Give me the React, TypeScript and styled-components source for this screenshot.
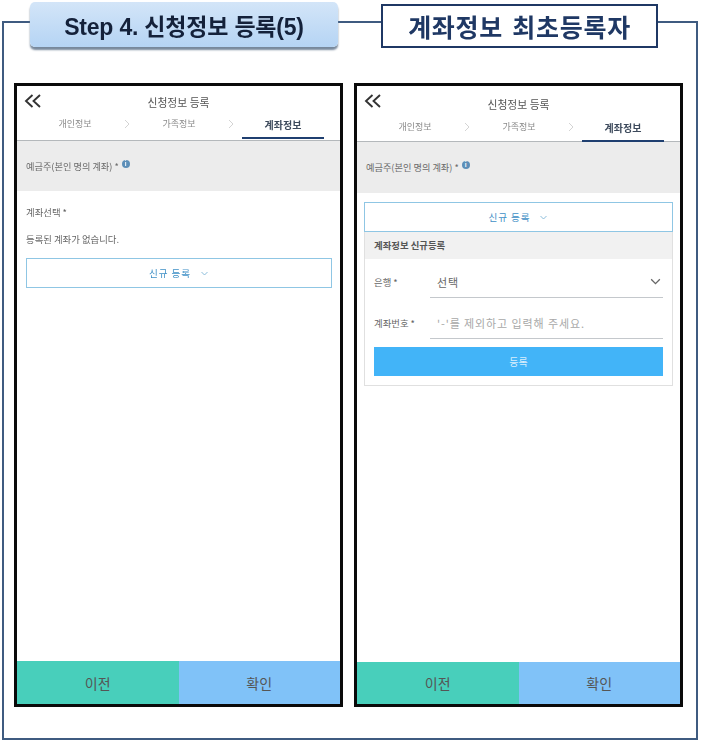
import React from 'react';
import styled, { createGlobalStyle } from 'styled-components';

const GlobalStyle = createGlobalStyle`
    html, body {
        margin: 0;
        padding: 0;
        background: #fff;
    }
    body {
        font-family: "Noto Sans CJK KR", "Noto Sans", sans-serif;
    }
`;

const Page = styled.div`
    width: 703px;
    height: 744px;
    padding: 21px 0 0 2px;
    box-sizing: border-box;
    filter: blur(0.35px);
`;

const Frame = styled.div`
    width: 696px;
    height: 719px;
    box-sizing: border-box;
    border: 2px solid #3f5b80;
`;

const Header = styled.div`
    display: flex;
    align-items: flex-start;
    height: 81px;
    margin-top: -21px;
    padding-left: 26px;
`;

const StepBadge = styled.div`
    width: 308px;
    height: 45px;
    display: flex;
    align-items: center;
    justify-content: center;
    box-sizing: border-box;
    border-radius: 5px;
    background: linear-gradient(#d3e5f8, #b5d4f4);
    box-shadow: 0 3px 2px #77889c;
    color: #14213a;
    font-family: "Liberation Sans", "Noto Sans CJK KR", sans-serif;
    font-size: 23px;
    font-weight: 700;
    letter-spacing: -0.2px;
    white-space: nowrap;
`;

const TitleBox = styled.div`
    width: 277px;
    height: 44px;
    margin: 2px 0 0 43px;
    display: flex;
    align-items: center;
    justify-content: center;
    box-sizing: border-box;
    border: 2px solid #1f3864;
    background: #fff;
    color: #1f3864;
    font-size: 25px;
    font-weight: 700;
    letter-spacing: 0.7px;
    word-spacing: 3px;
    white-space: nowrap;
`;

const Phones = styled.div`
    display: flex;
    gap: 11px;
    padding-left: 10px;
`;

const PhoneShell = styled.div`
    width: 329px;
    height: 624px;
    display: flex;
    flex-direction: column;
    box-sizing: border-box;
    border: 3px solid #0a0a0a;
    background: #fff;
`;

const TopBar = styled.div<{ $tall: boolean }>`
    position: relative;
    height: ${p => (p.$tall ? 56 : 55)}px;
    flex: none;
    box-sizing: border-box;
    border-bottom: 1px solid #b4b8bb;
`;

const BackIcon = styled.svg`
    position: absolute;
    left: 7px;
    top: 8px;
    width: 18px;
    height: 14px;
`;

const ScreenTitle = styled.div<{ $tall: boolean }>`
    padding-top: ${p => (p.$tall ? 11 : 9)}px;
    height: 15px;
    line-height: 15px;
    text-align: center;
    font-size: 10.8px;
    color: #555;
`;

const Tabs = styled.div<{ $tall: boolean }>`
    display: flex;
    align-items: center;
    height: 30px;
    margin-top: ${p => (p.$tall ? 0 : -1)}px;
    padding-left: 17px;
`;

const Tab = styled.div<{ $active?: boolean }>`
    width: 82px;
    height: 30px;
    line-height: ${p => (p.$active ? 31 : 29)}px;
    text-align: center;
    box-sizing: border-box;
    font-size: ${p => (p.$active ? 10 : 9)}px;
    font-weight: ${p => (p.$active ? 700 : 400)};
    color: ${p => (p.$active ? '#3d4a5c' : '#8a8a8a')};
    border-bottom: ${p => (p.$active ? '2px solid #1f3f70' : 'none')};
`;

const TabArrow = styled.svg`
    width: 22px;
    height: 10px;
    flex: none;
`;

const OwnerBand = styled.div<{ $tall: boolean }>`
    height: ${p => (p.$tall ? 51 : 50)}px;
    flex: none;
    display: flex;
    align-items: flex-start;
    gap: 3px;
    padding: 17px 0 0 9px;
    box-sizing: border-box;
    background: #ececec;
    font-size: 9.2px;
    line-height: 16px;
    color: #6a6a6a;
`;

const InfoDot = styled.span`
    width: 8px;
    height: 8px;
    margin-top: 2px;
    border-radius: 50%;
    background: #5d8fb8;
    color: #fff;
    font-size: 6px;
    font-weight: 700;
    line-height: 8px;
    text-align: center;
`;

const Content = styled.div`
    flex: 1;
`;

const EmptySection = styled.div`
    padding: 13px 8px 0 9px;
`;

const FieldLabel = styled.div`
    height: 16px;
    line-height: 16px;
    font-size: 9.4px;
    color: #666;
    margin-bottom: 11px;
`;

const NewButton = styled.div<{ $top: number }>`
    height: 30px;
    margin-top: ${p => p.$top}px;
    display: flex;
    align-items: center;
    justify-content: center;
    gap: 9px;
    box-sizing: border-box;
    border: 1px solid #8fc6e4;
    background: #fff;
    font-size: 9.6px;
    color: #3f90c6;
    letter-spacing: 0.9px;
`;

const RegisterSection = styled.div`
    padding: 0 7px;
`;

const RegisterCard = styled.div`
    height: 154px;
    box-sizing: border-box;
    border: 1px solid #e0e0e0;
    border-top: none;
`;

const CardHead = styled.div`
    height: 27px;
    line-height: 26px;
    padding-left: 9px;
    background: #f1f1f1;
    font-size: 9.4px;
    font-weight: 700;
    color: #555;
`;

const FormRow = styled.div<{ $top: number }>`
    display: flex;
    align-items: flex-end;
    height: 29px;
    margin: ${p => p.$top}px 9px 0;
`;

const RowLabel = styled.div`
    width: 56px;
    height: 28px;
    flex: none;
    line-height: 24px;
    font-size: 9.4px;
    color: #666;
`;

const RowField = styled.div<{ $muted?: boolean }>`
    flex: 1;
    height: 29px;
    display: flex;
    align-items: center;
    justify-content: space-between;
    padding: 0 1px 3px 7px;
    box-sizing: border-box;
    border-bottom: 1px solid #c4c8cc;
    font-size: 11px;
    letter-spacing: 0.9px;
    color: ${p => (p.$muted ? '#a8a8a8' : '#666')};
`;

const SubmitButton = styled.div`
    height: 29px;
    margin: 8px 9px 0;
    line-height: 29px;
    text-align: center;
    background: #42b4f8;
    font-size: 10px;
    color: #d8eefc;
`;

const FooterBar = styled.div<{ $tall: boolean }>`
    display: flex;
    flex: none;
    height: ${p => (p.$tall ? 42 : 43)}px;
`;

const FooterButton = styled.div<{ $color: string }>`
    flex: 1;
    display: flex;
    align-items: center;
    justify-content: center;
    background: ${p => p.$color};
    font-size: 14px;
    color: #555;
`;

const Chevron = ({ size, color }: { size: number; color: string }) => (
    <svg width={size} height={size} viewBox="0 0 12 12" fill="none" stroke={color} strokeWidth="1.2">
        <path d="M2 4l4 4 4-4" />
    </svg>
);

const PhoneFrame = ({ tall, children }: { tall: boolean; children: React.ReactNode }) => (
    <PhoneShell>
        <TopBar $tall={tall}>
            <BackIcon viewBox="0 0 18 14" fill="none" stroke="#333" strokeWidth="1.9">
                <path d="M8.5 1L2 7l6.5 6M16 1L9.5 7l6.5 6" />
            </BackIcon>
            <ScreenTitle $tall={tall}>신청정보 등록</ScreenTitle>
            <Tabs $tall={tall}>
                <Tab>개인정보</Tab>
                <TabArrow viewBox="0 0 22 10" fill="none" stroke="#d4d4d4" strokeWidth="1">
                    <path d="M9 1l4 4-4 4" />
                </TabArrow>
                <Tab>가족정보</Tab>
                <TabArrow viewBox="0 0 22 10" fill="none" stroke="#d4d4d4" strokeWidth="1">
                    <path d="M9 1l4 4-4 4" />
                </TabArrow>
                <Tab $active>계좌정보</Tab>
            </Tabs>
        </TopBar>
        <OwnerBand $tall={tall}>
            <span>예금주(본인 명의 계좌) *</span>
            <InfoDot>i</InfoDot>
        </OwnerBand>
        <Content>{children}</Content>
        <FooterBar $tall={tall}>
            <FooterButton $color="#48cfbb">이전</FooterButton>
            <FooterButton $color="#80c2f8">확인</FooterButton>
        </FooterBar>
    </PhoneShell>
);

export default function App() {
    return (
        <>
            <GlobalStyle />
            <Page>
                <Frame>
                    <Header>
                        <StepBadge>Step 4. 신청정보 등록(5)</StepBadge>
                        <TitleBox>계좌정보 최초등록자</TitleBox>
                    </Header>
                    <Phones>
                        <PhoneFrame tall={false}>
                            <EmptySection>
                                <FieldLabel>계좌선택 *</FieldLabel>
                                <FieldLabel>등록된 계좌가 없습니다.</FieldLabel>
                                <NewButton $top={1}>
                                    신규 등록 <Chevron size={9} color="#7fb4d6" />
                                </NewButton>
                            </EmptySection>
                        </PhoneFrame>
                        <PhoneFrame tall>
                            <RegisterSection>
                                <NewButton $top={9}>
                                    신규 등록 <Chevron size={9} color="#7fb4d6" />
                                </NewButton>
                                <RegisterCard>
                                    <CardHead>계좌정보 신규등록</CardHead>
                                    <FormRow $top={10}>
                                        <RowLabel>은행 *</RowLabel>
                                        <RowField>
                                            선택 <Chevron size={13} color="#666" />
                                        </RowField>
                                    </FormRow>
                                    <FormRow $top={12}>
                                        <RowLabel>계좌번호 *</RowLabel>
                                        <RowField $muted>'-'를 제외하고 입력해 주세요.</RowField>
                                    </FormRow>
                                    <SubmitButton>등록</SubmitButton>
                                </RegisterCard>
                            </RegisterSection>
                        </PhoneFrame>
                    </Phones>
                </Frame>
            </Page>
        </>
    );
}
